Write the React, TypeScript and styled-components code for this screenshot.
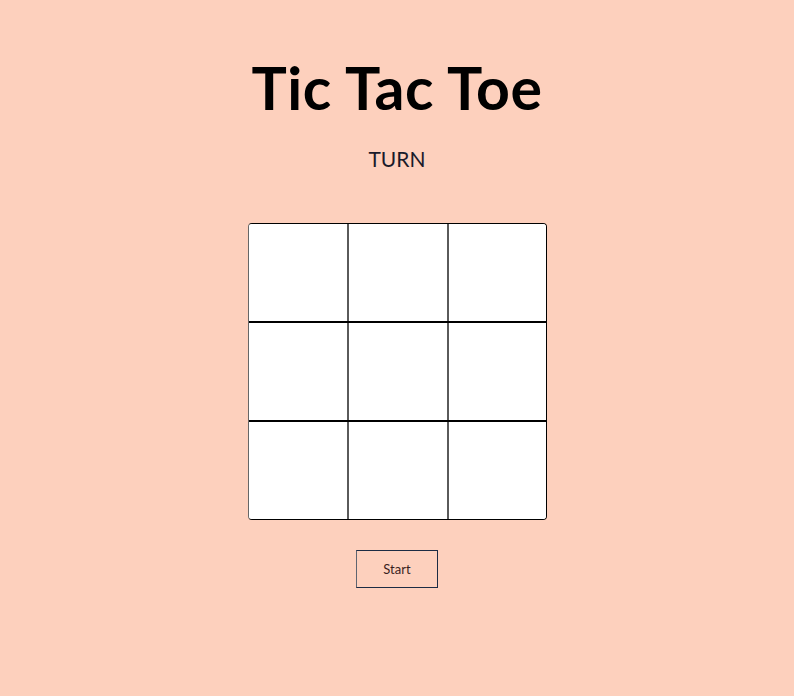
import React from "react";
import styled, { createGlobalStyle } from "styled-components";

const Global = createGlobalStyle`
  html, body { margin: 0; padding: 0; background: #fdd0bd; }
  body { font-family: "Lato", "Open Sans", sans-serif; }
`;

const Page = styled.main`
  min-height: 696px;
  display: flex;
  flex-direction: column;
  align-items: center;
  background: #fdd0bd;
`;

const Title = styled.h1`
  margin: 53px 0 0;
  font-size: 59px;
  font-weight: 700;
  line-height: 70px;
  color: #000;
  letter-spacing: 0.6px;
`;

const Turn = styled.div`
  margin-top: 23px;
  font-size: 21px;
  line-height: 26px;
  color: #1a1a2a;
`;

const Board = styled.div`
  margin-top: 51px;
  width: 299px;
  height: 297px;
  display: grid;
  grid-template-columns: 98px 2px 98px 2px 98px;
  grid-template-rows: 97px 2px 97px 2px 97px;
  border: 1px solid #000;
  border-left-color: #666;
  border-radius: 4px;
  background: #fff;
  overflow: hidden;
  box-sizing: border-box;
`;

const Cell = styled.button`
  border: none;
  padding: 0;
  margin: 0;
  background: #fff;
  cursor: pointer;
`;

const VLine = styled.div`
  background: #5a5a5a;
`;

const HLine = styled.div`
  background: #000;
  grid-column: 1 / -1;
`;

const StartButton = styled.button`
  margin-top: 30px;
  width: 82px;
  height: 38px;
  border: 1px solid #1c2b44;
  border-left-color: #5e6470;
  background: transparent;
  font-family: "Lato", "Open Sans", sans-serif;
  font-size: 13px;
  color: #3a1e1e;
  cursor: pointer;
`;

function Row() {
  return (
    <>
      <Cell />
      <VLine />
      <Cell />
      <VLine />
      <Cell />
    </>
  );
}

export default function App() {
  return (
    <>
      <Global />
      <Page>
        <Title>Tic Tac Toe</Title>
        <Turn>TURN</Turn>
        <Board>
          <Row />
          <HLine />
          <Row />
          <HLine />
          <Row />
        </Board>
        <StartButton>Start</StartButton>
      </Page>
    </>
  );
}
